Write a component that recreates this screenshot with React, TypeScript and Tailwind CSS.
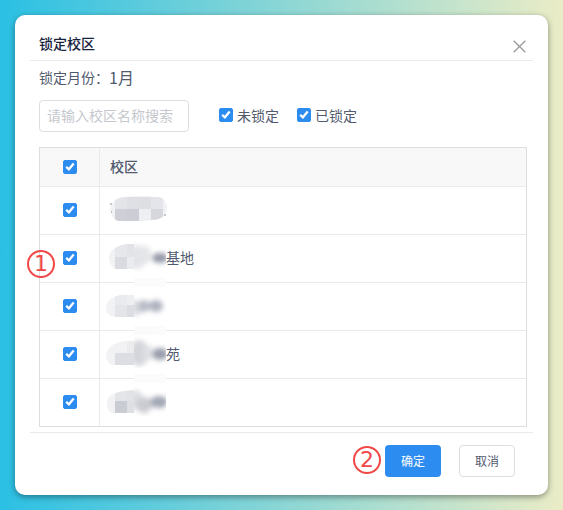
import React, { useState } from 'react';

interface CheckBoxProps {
  id: string;
  checked: boolean;
  onChange: () => void;
  label?: string;
}

function CheckBox({ id, checked, onChange, label }: CheckBoxProps) {
  return (
    <span className="relative inline-flex h-[14px] w-[14px]">
      <input
        type="checkbox"
        id={id}
        checked={checked}
        onChange={onChange}
        aria-label={label}
        className="h-[14px] w-[14px] cursor-pointer appearance-none rounded-[2px] border border-[#dcdee2] bg-white checked:border-[#2d8cf0] checked:bg-[#2d8cf0]"
      />
      {checked && (
        <svg viewBox="0 0 14 14" className="pointer-events-none absolute inset-0 h-[14px] w-[14px]" fill="none" stroke="#fff" strokeWidth="2.3">
          <path d="M3.2 6.9 5.9 9.3 10.7 3.6" />
        </svg>
      )}
    </span>
  );
}

interface Tile {
  x: number;
  y: number;
  w: number;
  h: number;
  fill: string;
}

interface Blob {
  cx: number;
  cy: number;
  rx: number;
  ry: number;
  fill: string;
}

interface Campus {
  id: string;
  suffix: string;
  outline: string;
  tiles: Tile[];
  blobs: Blob[];
  smudge: boolean;
}

const campuses: Campus[] = [
  {
    id: 'c1',
    suffix: '',
    outline: 'M25 10Q40 8 56 10C64 10 67 15 67 20C67 29 60 33 52 33Q35 35 19 34C13 33 11 28 10 22C11 15 17 10 25 10Z',
    tiles: [
      { x: 15, y: 10, w: 12, h: 12, fill: '#e4e5e9' },
      { x: 27, y: 10, w: 12, h: 12, fill: '#dfe0e5' },
      { x: 39, y: 10, w: 12, h: 12, fill: '#dddfe3' },
      { x: 51, y: 10, w: 12, h: 12, fill: '#e4e5ea' },
      { x: 15, y: 22, w: 12, h: 12, fill: '#cfd0d7' },
      { x: 27, y: 22, w: 12, h: 12, fill: '#cdced5' },
      { x: 39, y: 22, w: 12, h: 12, fill: '#eeeff2' },
      { x: 51, y: 22, w: 12, h: 12, fill: '#d6d7dd' },
    ],
    blobs: [],
    smudge: false,
  },
  {
    id: 'c2',
    suffix: '基地',
    outline: 'M34 9H28C17 10 9 15 9 23C9 28 12 32 15 34H34Z',
    tiles: [
      { x: 15, y: 9, w: 12, h: 13, fill: '#e7e8eb' },
      { x: 27, y: 9, w: 8, h: 13, fill: '#e2e3e7' },
      { x: 15, y: 22, w: 12, h: 12, fill: '#dadbe0' },
      { x: 27, y: 22, w: 8, h: 12, fill: '#eaebee' },
    ],
    blobs: [
      { cx: 37, cy: 22, rx: 9, ry: 12, fill: '#e3e4e8' },
      { cx: 45, cy: 20, rx: 6, ry: 9, fill: '#e4e5e8' },
      { cx: 60, cy: 23, rx: 8, ry: 5, fill: '#9498a8' },
    ],
    smudge: true,
  },
  {
    id: 'c3',
    suffix: '',
    outline: 'M34 12H22C13 13 6 17 6 25C6 30 10 33 14 34H34Z',
    tiles: [
      { x: 15, y: 12, w: 12, h: 10, fill: '#e9eaed' },
      { x: 27, y: 12, w: 8, h: 10, fill: '#eeeff1' },
      { x: 15, y: 22, w: 12, h: 12, fill: '#e4e5e9' },
      { x: 27, y: 22, w: 8, h: 12, fill: '#dcdde2' },
    ],
    blobs: [
      { cx: 36, cy: 25, rx: 6, ry: 8, fill: '#dcdde2' },
      { cx: 44, cy: 23, rx: 6, ry: 6, fill: '#b9bcc7' },
      { cx: 56, cy: 23, rx: 7, ry: 6, fill: '#b0b3c0' },
    ],
    smudge: true,
  },
  {
    id: 'c4',
    suffix: '苑',
    outline: 'M34 10C22 9 6 13 6 25C6 29 9 34 13 34H34Z',
    tiles: [
      { x: 15, y: 22, w: 20, h: 12, fill: '#dddee3' },
      { x: 27, y: 10, w: 8, h: 12, fill: '#ececef' },
    ],
    blobs: [
      { cx: 39, cy: 22, rx: 9, ry: 13, fill: '#d4d5da' },
      { cx: 48, cy: 22, rx: 5, ry: 8, fill: '#e0e1e5' },
      { cx: 60, cy: 23, rx: 8, ry: 6, fill: '#999dac' },
    ],
    smudge: true,
  },
  {
    id: 'c5',
    suffix: '',
    outline: 'M34 11C23 12 7 13 7 24C7 29 9 34 13 34H34Z',
    tiles: [
      { x: 15, y: 11, w: 12, h: 11, fill: '#e4e5e9' },
      { x: 27, y: 11, w: 8, h: 11, fill: '#e2e3e7' },
      { x: 15, y: 22, w: 12, h: 12, fill: '#c9ccd3' },
      { x: 27, y: 22, w: 8, h: 12, fill: '#dddfe3' },
    ],
    blobs: [
      { cx: 36, cy: 21, rx: 7, ry: 10, fill: '#dddee2' },
      { cx: 44, cy: 26, rx: 8, ry: 8, fill: '#cbccd2' },
      { cx: 59, cy: 23, rx: 9, ry: 6, fill: '#a3a7b5' },
    ],
    smudge: false,
  },
];

function NameMask({ campus }: { campus: Campus }) {
  const { id, outline, tiles, blobs, smudge } = campus;
  return (
    <svg width="66" height="47" viewBox="0 0 66 47" className="block shrink-0 overflow-visible" aria-hidden="true">
      <defs>
        <clipPath id={`clip-${id}`}>
          <path d={outline} />
        </clipPath>
        <clipPath id={`edge-${id}`}>
          <rect x="34" y="3" width="32" height="34" />
        </clipPath>
        <filter id={`blur-${id}`} x="-50%" y="-50%" width="200%" height="200%">
          <feGaussianBlur stdDeviation="2.6" />
        </filter>
      </defs>
      <g clipPath={`url(#clip-${id})`}>
        <rect x="0" y="0" width="70" height="47" fill="#f2f2f4" />
        {tiles.map((t, i) => (
          <rect key={i} x={t.x} y={t.y} width={t.w} height={t.h} fill={t.fill} />
        ))}
      </g>
      {blobs.length > 0 ? (
        <g clipPath={`url(#edge-${id})`}>
          <g filter={`url(#blur-${id})`}>
            {blobs.map((b, i) => (
              <ellipse key={i} cx={b.cx} cy={b.cy} rx={b.rx} ry={b.ry} fill={b.fill} />
            ))}
          </g>
        </g>
      ) : (
        <path d="M10 17h2M11 25h1M64 28h2" stroke="#8b90a0" />
      )}
      {smudge && <rect x="34" y="43" width="32" height="9" fill="#fbfbfc" />}
    </svg>
  );
}

function StepMark({ value }: { value: string }) {
  return (
    <span className="flex h-7 w-7 items-center justify-center rounded-full border-2 border-[#f04848] font-['DejaVu_Sans',sans-serif] text-[22px] leading-6 text-[#f04848]">
      {value}
    </span>
  );
}

export default function App() {
  const [keyword, setKeyword] = useState('');
  const [showUnlocked, setShowUnlocked] = useState(true);
  const [showLocked, setShowLocked] = useState(true);
  const [selected, setSelected] = useState<string[]>(campuses.map(c => c.id));

  const allSelected = selected.length === campuses.length;

  const toggleAll = () => {
    setSelected(allSelected ? [] : campuses.map(c => c.id));
  };

  const toggle = (id: string) => {
    setSelected(selected.includes(id) ? selected.filter(s => s !== id) : [...selected, id]);
  };

  return (
    <div className="min-h-screen bg-linear-to-r/srgb from-[#2bc0e4] to-[#eaecc6] p-[15px] font-['Noto_Sans_CJK_SC',sans-serif] text-sm text-[#515a6e]">
      <div role="dialog" aria-labelledby="dialog-title" className="rounded-[10px] bg-white px-[15px] pb-[18px] shadow-[0_2px_6px_rgba(0,0,0,0.4)]">
        <div className="flex h-[46px] items-center justify-between border-b border-[#e8eaec] pt-3 pr-[7px] pl-[9px]">
          <h2 id="dialog-title" className="pb-0.5 text-sm font-medium text-[#17233d]">锁定校区</h2>
          <button aria-label="关闭" className="cursor-pointer pt-1.5">
            <svg width="13" height="13" viewBox="0 0 13 13" fill="none" stroke="#999" strokeWidth="1.3">
              <path d="M.7.7 12.3 12.3M12.3.7.7 12.3" />
            </svg>
          </button>
        </div>

        <div className="border-b border-[#e8eaec] pr-[6px] pb-[5px] pl-[9px]">
          <p className="flex h-8 items-center">
            锁定月份：<span className="text-base">1月</span>
          </p>

          <div className="mt-[7px] flex items-center">
            <input
              type="text"
              aria-label="校区名称"
              value={keyword}
              onChange={(e) => setKeyword(e.target.value)}
              placeholder="请输入校区名称搜索"
              className="h-8 w-[150px] rounded border border-[#dcdee2] px-[7px] pb-0.5 text-sm placeholder:text-[#c5c8ce]"
            />
            <div className="ml-[30px] flex items-center gap-[18px] pb-0.5">
              <div className="flex items-center gap-1">
                <CheckBox id="unlocked" checked={showUnlocked} onChange={() => setShowUnlocked(!showUnlocked)} />
                <label htmlFor="unlocked">未锁定</label>
              </div>
              <div className="flex items-center gap-1">
                <CheckBox id="locked" checked={showLocked} onChange={() => setShowLocked(!showLocked)} />
                <label htmlFor="locked">已锁定</label>
              </div>
            </div>
          </div>

          <div className="relative mt-[15px] border border-[#dcdee2]">
            <table className="w-full table-fixed border-separate border-spacing-0">
              <thead>
                <tr className="h-[39px] bg-[#f8f8f9]">
                  <th className="w-[60px] border-r border-b border-[#e8eaec] p-0 align-middle">
                    <span className="flex justify-center">
                      <CheckBox id="all" checked={allSelected} onChange={toggleAll} label="全选" />
                    </span>
                  </th>
                  <th className="border-b border-[#e8eaec] px-[10px] pt-0 pb-0.5 text-left font-medium">校区</th>
                </tr>
              </thead>
              <tbody className="[&>tr:last-child>td]:border-b-0">
                {campuses.map((campus) => (
                  <tr key={campus.id}>
                    <td className="border-r border-b border-[#e8eaec] px-0 pt-0 pb-0.5 align-middle">
                      <span className="flex justify-center">
                        <CheckBox
                          id={campus.id}
                          checked={selected.includes(campus.id)}
                          onChange={() => toggle(campus.id)}
                          label="选择校区"
                        />
                      </span>
                    </td>
                    <td className="border-b border-[#e8eaec] p-0">
                      <div className="flex items-center">
                        <NameMask campus={campus} />
                        <span className="pb-1">{campus.suffix}</span>
                      </div>
                    </td>
                  </tr>
                ))}
              </tbody>
            </table>
            <span className="absolute top-[102px] -left-[13px]">
              <StepMark value="1" />
            </span>
          </div>
        </div>

        <div className="flex justify-end gap-[18px] pt-3 pr-[18px] text-xs">
          <div className="relative">
            <span className="absolute top-[1px] -left-8">
              <StepMark value="2" />
            </span>
            <button className="h-8 w-14 cursor-pointer rounded bg-[#2d8cf0] text-white">确定</button>
          </div>
          <button className="h-8 w-14 cursor-pointer rounded border border-[#dcdee2] bg-white">取消</button>
        </div>
      </div>
    </div>
  );
}
